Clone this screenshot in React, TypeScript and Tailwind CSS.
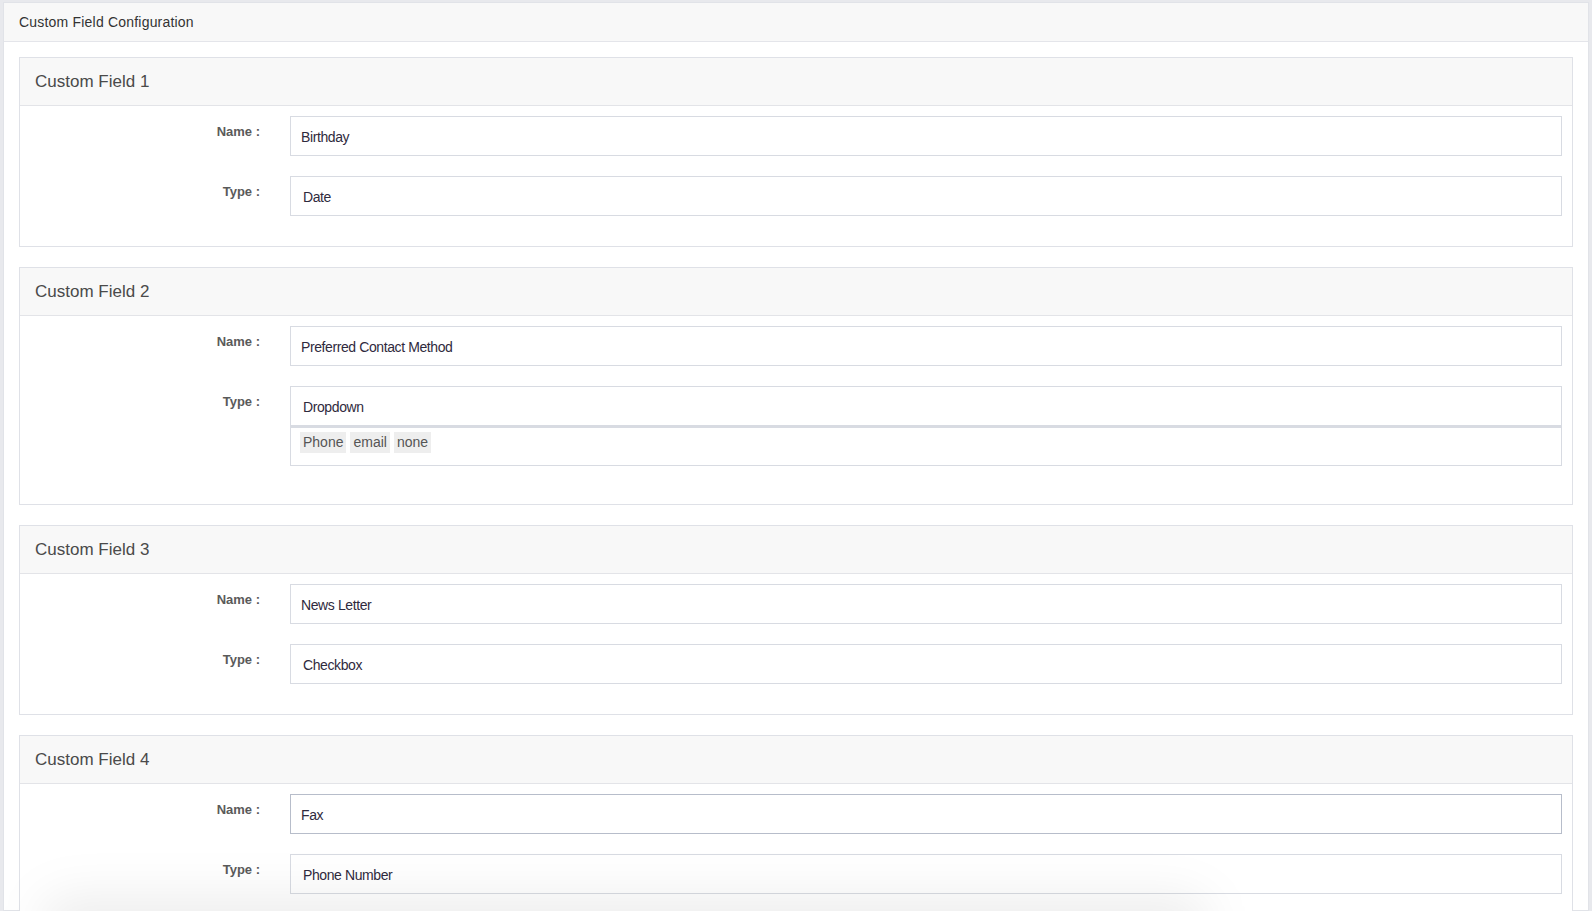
import React from "react";

interface FieldConfig {
  id: number;
  name: string;
  type: string;
  options?: string[];
  focused?: boolean;
}

const fields: FieldConfig[] = [
  { id: 1, name: "Birthday", type: "Date" },
  { id: 2, name: "Preferred Contact Method", type: "Dropdown", options: ["Phone", "email", "none"] },
  { id: 3, name: "News Letter", type: "Checkbox" },
  { id: 4, name: "Fax", type: "Phone Number", focused: true },
];

function FieldCard({ field }: { field: FieldConfig }) {
  return (
    <div className="border border-[#dfe1e7] bg-white">
      <div className="flex h-[48px] items-center border-b border-[#e3e4e8] bg-[#f8f8f8] pl-[15px] text-[17px] text-[#4a4a4a]">
        Custom Field {field.id}
      </div>
      <div className={field.options ? "pt-[10px] pb-[38px]" : "pt-[10px] pb-[30px]"}>
        <div className="flex">
          <div className="w-[270px] shrink-0 pr-[30px] pt-[6px] text-right text-[13px] font-semibold text-[#5a5a5a]">
            Name :
          </div>
          <div
            className={
              "mr-[10px] flex h-[40px] flex-1 items-center border pl-[10px] pt-[2px] text-[14px] tracking-[-0.4px] text-[#2f2a3d] " +
              (field.focused ? "border-[#b7bdca]" : "border-[#d8dbe2]")
            }
          >
            {field.name}
          </div>
        </div>
        <div className="mt-[20px] flex">
          <div className="w-[270px] shrink-0 pr-[30px] pt-[6px] text-right text-[13px] font-semibold text-[#5a5a5a]">
            Type :
          </div>
          <div className="mr-[10px] flex-1">
            <div className="flex h-[40px] items-center border border-[#d8dbe2] pl-[12px] pt-[2px] text-[14px] tracking-[-0.4px] text-[#2f2a3d]">
              {field.type}
            </div>
            {field.options && (
              <div className="flex h-[40px] items-start gap-[4px] border border-t-2 border-[#d8dbe2] pl-[9px] pt-[4px]">
                {field.options.map((opt) => (
                  <span key={opt} className="bg-[#eeeeee] px-[3px] py-[2px] text-[14px] leading-[17px] text-[#555]">
                    {opt}
                  </span>
                ))}
              </div>
            )}
          </div>
        </div>
      </div>
    </div>
  );
}

export default function App() {
  return (
    <div
      className="relative h-[911px] overflow-hidden bg-[#e8e9ed] pl-[3px] pr-[3px] pt-[2px]"
      style={{ fontFamily: '"Liberation Sans", Arial, sans-serif' }}
    >
      <div className="h-full border border-[#e1e3e8] bg-white">
        <div className="flex h-[39px] items-center border-b border-[#e4e5ea] bg-[#f8f8f8] pl-[15px] text-[14px] tracking-[0.2px] text-[#333]">
          Custom Field Configuration
        </div>
        <div className="flex flex-col gap-[20px] px-[15px] pt-[15px]">
          {fields.map((f) => (
            <FieldCard key={f.id} field={f} />
          ))}
        </div>
      </div>
      <div className="pointer-events-none absolute bottom-[-45px] left-[40px] h-[60px] w-[1170px] rounded-full bg-black/[0.07] blur-xl" />
    </div>
  );
}
